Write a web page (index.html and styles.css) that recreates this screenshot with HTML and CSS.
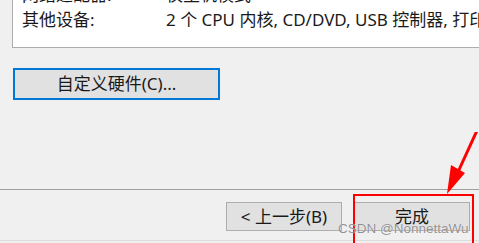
FILE: index.html
```html
<!DOCTYPE html>
<html>
<head lang="zh">
    <meta charset="UTF-8">
    <title>新建虚拟机向导</title>
    <link rel="stylesheet" href="styles.css">
</head>
<body>
  <div class="summary">
    <div class="row"><span class="label">网络适配器:</span><span class="value">仅主机模式</span></div>
    <div class="row"><span class="label">其他设备:</span><span class="value">2 个 CPU 内核, CD/DVD, USB 控制器, 打印机, 声卡</span></div>
  </div>
  <button class="btn custom">自定义硬件(C)...</button>
  <div class="footer">
    <button class="btn">&lt; 上一步(B)</button>
    <button class="btn">完成</button>
  </div>
  <div class="mark"></div>
  <svg class="arrow" width="60" height="80" viewBox="0 0 60 80">
    <line x1="60" y1="-8" x2="38" y2="40" stroke="#ff0000" stroke-width="3"/>
    <polygon points="27,62 31,33 45,41" fill="#ff0000"/>
  </svg>
  <div class="watermark">CSDN @NonnettaWu</div>
</body>
</html>
```
FILE: styles.css
```css
*{
  margin: 0;
  padding: 0;
  box-sizing: border-box;
}
body{
  width: 479px;
  height: 243px;
  overflow: hidden;
  background-color: #f0f0f0;
  font-family: "Noto Sans", "Noto Sans CJK SC", sans-serif;
  font-size: 17px;
  color: #1a1a1a;
  position: relative;
}
.summary{
  margin: -18px 0 0 12px;
  padding: 0 0 15px 9px;
  background-color: #fff;
  border-left: 1px solid #adadad;
  border-bottom: 1px solid #adadad;
  white-space: nowrap;
  overflow: hidden;
}
.row{
  display: flex;
  line-height: 25px;
}
.label{
  width: 144px;
  flex-shrink: 0;
}
.btn{
  font-family: inherit;
  font-size: 17px;
  line-height: 20px;
  color: #1a1a1a;
  background-color: #e1e1e1;
  border: 1px solid #adadad;
  width: 116px;
  height: 29px;
}
.custom{
  display: block;
  margin: 20px 0 0 13px;
  width: 207px;
  height: 32px;
  border: 2px solid #0078d7;
}
.footer{
  margin-top: 89px;
  border-top: 1px solid #a0a0a0;
  padding: 12px 9px 0 0;
  display: flex;
  justify-content: flex-end;
  gap: 12px;
  height: 52px;
  border-bottom: 1px solid #dcdcdc;
}
.mark{
  position: absolute;
  left: 353px;
  top: 194px;
  width: 121px;
  height: 52px;
  border: 2px solid #ff0000;
}
.arrow{
  position: absolute;
  left: 420px;
  top: 132px;
}
.watermark{
  position: absolute;
  left: 338px;
  top: 221px;
  font-family: "Liberation Sans", sans-serif;
  font-size: 13.5px;
  color: rgba(110, 110, 110, 0.75);
  text-shadow: 0 0 1px #fff;
}
```
